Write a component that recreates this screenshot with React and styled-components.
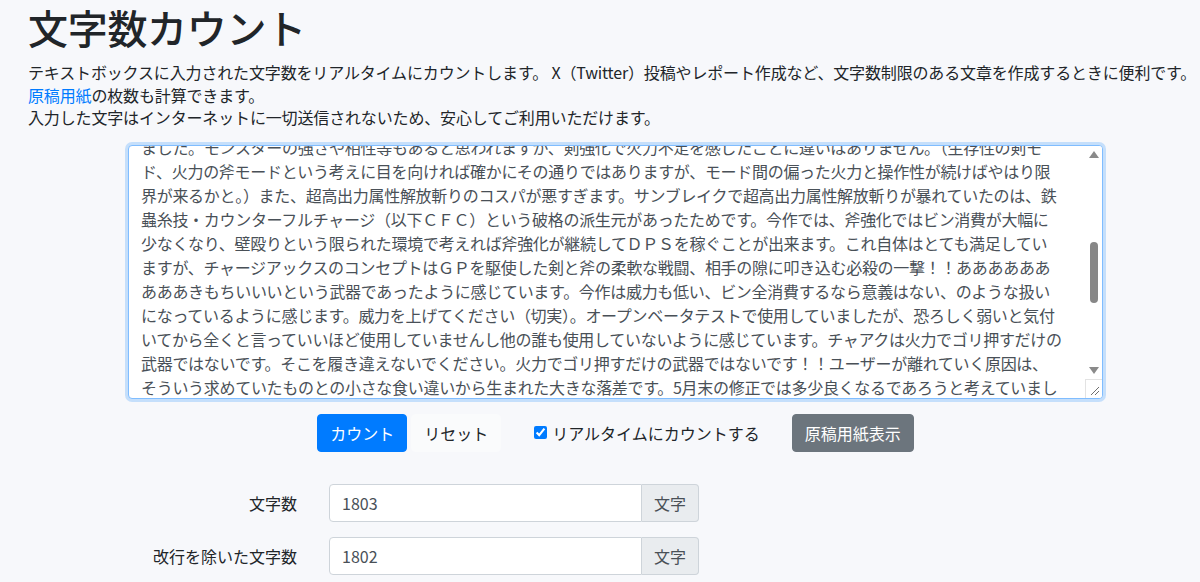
import React, { useLayoutEffect, useRef } from "react";
import styled, { createGlobalStyle } from "styled-components";

const GlobalStyle = createGlobalStyle`
  html, body { margin: 0; padding: 0; }
  body {
    background: #f7f8fb;
    color: #212529;
    font-family: "Noto Sans CJK JP", "Noto Sans", sans-serif;
    font-size: 16px;
    line-height: 1.5;
  }
  * { box-sizing: border-box; }
`;

const Page = styled.main`
  padding: 3px 4px 0 28px;
`;

const Title = styled.h1`
  margin: 0;
  font-size: 40px;
  font-weight: 500;
  line-height: 1.2;
  letter-spacing: -0.3px;
  color: #212529;
`;

const Lead = styled.p`
  margin: 10px 0 0;
  font-size: 16px;
  line-height: 22.5px;
  letter-spacing: -0.15px;
  white-space: nowrap;
`;

const Link = styled.a`
  color: #007bff;
  text-decoration: none;
`;

const Block = styled.div`
  width: 975px;
  margin-left: 100px;
`;

const Frame = styled.div`
  display: flex;
  height: 254px;
  margin-top: 16px;
  background: #fff;
  border: 1px solid #80bdff;
  border-radius: 4px;
  box-shadow: 0 0 0 3px rgba(0, 123, 255, 0.2);
  overflow: hidden;
`;

const Editor = styled.textarea`
  flex: 1;
  min-width: 0;
  height: 100%;
  margin: 0;
  padding: 6px 4px 6px 12px;
  font-family: "Noto Sans CJK JP", sans-serif;
  font-size: 16px;
  line-height: 24px;
  letter-spacing: -0.3px;
  color: #495057;
  background: transparent;
  border: none;
  outline: none;
  resize: none;
  white-space: pre;
  overflow: hidden;
  scrollbar-width: none;
`;

const Rail = styled.div`
  display: flex;
  flex-direction: column;
  width: 17px;
  flex: none;
  background: #fff;
`;

const ArrowButton = styled.div`
  display: flex;
  align-items: center;
  justify-content: center;
  height: 17px;
  flex: none;
`;

const Track = styled.div`
  flex: 1;
  display: flex;
  justify-content: center;
`;

const Thumb = styled.div`
  width: 8px;
  border-radius: 4px;
  background: #878787;
`;

const Grip = styled.div`
  height: 19px;
  flex: none;
  display: flex;
  align-items: flex-end;
  justify-content: flex-end;
  border-top: 1px solid #e3e3e3;
  border-left: 1px solid #e3e3e3;
`;

const Toolbar = styled.div`
  display: flex;
  align-items: center;
  justify-content: center;
  margin-top: 15px;
`;

const Button = styled.button`
  font-family: "Noto Sans CJK JP", sans-serif;
  font-size: 16px;
  line-height: 24px;
  padding: 6px 12px;
  border-radius: 4px;
  border: 1px solid ${(p) => p.$bg};
  background: ${(p) => p.$bg};
  color: ${(p) => p.$fg};
  margin-right: ${(p) => p.$after || 0}px;
  cursor: pointer;
`;

const CheckLabel = styled.label`
  display: flex;
  align-items: center;
  margin-right: 32px;
  font-size: 16px;
  color: #212529;
`;

const Check = styled.input`
  width: 13px;
  height: 13px;
  margin: 0 5px 0 0;
  accent-color: #007bff;
`;

const Results = styled.div`
  display: grid;
  grid-template-columns: 269px 370px;
  column-gap: 32px;
  row-gap: 15px;
  margin-top: 32px;
  align-items: center;
`;

const Label = styled.label`
  text-align: right;
  font-size: 16px;
  color: #212529;
`;

const Group = styled.div`
  display: flex;
  height: 38px;
`;

const Field = styled.input`
  flex: 1;
  min-width: 0;
  height: 100%;
  padding: 6px 12px;
  font-family: "Noto Sans CJK JP", sans-serif;
  font-size: 16px;
  color: #495057;
  background: #fff;
  border: 1px solid #ced4da;
  border-radius: 4px 0 0 4px;
  outline: none;
`;

const Addon = styled.span`
  display: flex;
  align-items: center;
  padding: 6px 12px;
  font-size: 16px;
  color: #495057;
  background: #e9ecef;
  border: 1px solid #ced4da;
  border-left: none;
  border-radius: 0 4px 4px 0;
`;

const before = [
  "チャージアックスを長年愛用してきた一人のハンターとして、今作のチャージアックスについて率直な意見を送らせて",
  "いただきます。まず初めに、開発陣の皆様には素晴らしい作品を作っていただいたことに心から感謝しております。",
  "モンスターの動きや環境の作り込み、ストーリーの演出など、どれを取っても過去作を上回る出来だと感じています。",
  "しかし、チャージアックスという武器に関しては、どうしても納得のいかない点がいくつかありますので、ここに記し",
  "ます。長文となってしまい大変恐縮ですが、一人のユーザーの声として最後まで目を通していただけますと幸いで",
  "す。まず、剣モードの火力についてです。今作の剣モードは属性強化状態でも火力が低く、斧モードと比べると",
  "その差は歴然です。剣強化の恩恵もサンブレイクの頃と比べて小さくなっており、剣モードで立ち回る理由がほとんど",
  "見当たりません。高出力属性解放斬りも、威力に対してビンの消費が重く、気軽に振れる技ではなくなってしまいまし",
  "た。また、ガードポイントからの派生も、モンスターによっては非常に狙いにくく、リスクに見合ったリターンが得ら",
  "れているとは言えません。集中モードや相殺技など新しいシステムが追加されたことは喜ばしいのですが、チャージア",
  "ックスの場合はそれらを活かす場面が少なく、結局は斧モードで殴り続けるだけの単調な立ち回りになりがちです。",
  "私自身、発売日から毎日のようにチャージアックスを担いで狩りに出かけていましたが、上位に上がった頃から明らか",
  "に討伐時間が伸びるようになり、他の武器に持ち替えた途端に大幅に時間が短縮されたことで、その差を痛感いたし",
];

const visible = [
  "ました。モンスターの強さや相性等もあると思われますが、剣強化で火力不足を感じたことに違いはありません。（生存性の剣モ",
  "ド、火力の斧モードという考えに目を向ければ確かにその通りではありますが、モード間の偏った火力と操作性が続けばやはり限",
  "界が来るかと。）また、超高出力属性解放斬りのコスパが悪すぎます。サンブレイクで超高出力属性解放斬りが暴れていたのは、鉄",
  "蟲糸技・カウンターフルチャージ（以下ＣＦＣ）という破格の派生元があったためです。今作では、斧強化ではビン消費が大幅に",
  "少なくなり、壁殴りという限られた環境で考えれば斧強化が継続してＤＰＳを稼ぐことが出来ます。これ自体はとても満足してい",
  "ますが、チャージアックスのコンセプトはＧＰを駆使した剣と斧の柔軟な戦闘、相手の隙に叩き込む必殺の一撃！！ああああああ",
  "あああきもちいいいという武器であったように感じています。今作は威力も低い、ビン全消費するなら意義はない、のような扱い",
  "になっているように感じます。威力を上げてください（切実）。オープンベータテストで使用していましたが、恐ろしく弱いと気付",
  "いてから全くと言っていいほど使用していませんし他の誰も使用していないように感じています。チャアクは火力でゴリ押すだけの",
  "武器ではないです。そこを履き違えないでください。火力でゴリ押すだけの武器ではないです！！ユーザーが離れていく原因は、",
  "そういう求めていたものとの小さな食い違いから生まれた大きな落差です。5月末の修正では多少良くなるであろうと考えていまし",
];

const after = [
  "たが、実際にはほとんど変化が感じられず、非常に残念に思っております。剣モードの火力の底上げ、超高出力属性",
  "解放斬りのビン消費量や威力の見直し、ガードポイントの判定の改善など、調整していただきたい点は多々あります。",
  "チャージアックスは、ガードで攻撃を受け止め、ビンを溜め、ここぞという場面で必殺の一撃を叩き込むという、",
  "他の武器にはない独特の爽快感を持った武器です。その爽快感こそがこの武器の魅力であり、多くのユーザーが",
  "チャージアックスを使い続けてきた理由だと思っています。どうか次回以降のアップデートでは、その魅力を取り戻",
  "せるような調整をしていただけることを心より願っております。長々と失礼いたしました。",
  "最後になりますが、今後もモンスターハンターシリーズを応援しております。開発陣の皆様、お体に気をつけて",
  "これからも素晴らしい狩猟体験を届けてください。チャージアックスが再び輝ける日を心待ちにしております。",
  "今後のアップデートの内容を楽しみにしながら、これからもチャージアックスを担いで狩りに出かけたいと思います。",
  "一人のチャアク使いより。",
];

const fullText = [...before, ...visible, ...after].join("\n");

// scroll geometry
const LINE = 24;
const CLIENT = 252;
const CONTENT = (before.length + visible.length + after.length) * LINE + 12;
const SCROLL_TOP = 6 + LINE * before.length + 11;
const TRACK = CLIENT - 17 - 17 - 19;
const THUMB_H = Math.round((TRACK * CLIENT) / CONTENT);
const THUMB_TOP = Math.round(((TRACK - THUMB_H) * SCROLL_TOP) / (CONTENT - CLIENT));

const Arrow = ({ up }) => (
  <svg width="10" height="7" viewBox="0 0 10 7">
    <polygon points={up ? "0,7 5,0 10,7" : "0,0 5,7 10,0"} fill="#8a8a8a" />
  </svg>
);

export default function App() {
  const ref = useRef(null);
  useLayoutEffect(() => {
    if (ref.current) ref.current.scrollTop = SCROLL_TOP;
  }, []);

  return (
    <>
      <GlobalStyle />
      <Page>
        <Title>文字数カウント</Title>
        <Lead>
          テキストボックスに入力された文字数をリアルタイムにカウントします。 X（Twitter）投稿やレポート作成など、文字数制限のある文章を作成するときに便利です。
          <br />
          <Link href="#">原稿用紙</Link>の枚数も計算できます。
          <br />
          入力した文字はインターネットに一切送信されないため、安心してご利用いただけます。
        </Lead>
        <Block>
          <Frame>
            <Editor ref={ref} wrap="off" defaultValue={fullText} spellCheck={false} />
            <Rail>
              <ArrowButton>
                <Arrow up />
              </ArrowButton>
              <Track>
                <Thumb style={{ marginTop: THUMB_TOP, height: THUMB_H }} />
              </Track>
              <ArrowButton>
                <Arrow />
              </ArrowButton>
              <Grip>
                <svg width="16" height="16" viewBox="0 0 16 16">
                  <line x1="13" y1="5" x2="5" y2="13" stroke="#6f6f6f" strokeWidth="1" />
                  <line x1="13" y1="9" x2="9" y2="13" stroke="#6f6f6f" strokeWidth="1" />
                </svg>
              </Grip>
            </Rail>
          </Frame>
          <Toolbar>
            <Button $bg="#007bff" $fg="#fff" $after={4}>カウント</Button>
            <Button $bg="#fafbfc" $fg="#212529" $after={33}>リセット</Button>
            <CheckLabel>
              <Check type="checkbox" defaultChecked />
              リアルタイムにカウントする
            </CheckLabel>
            <Button $bg="#6c757d" $fg="#fff">原稿用紙表示</Button>
          </Toolbar>
        </Block>
        <Results>
          <Label>文字数</Label>
          <Group>
            <Field readOnly value="1803" />
            <Addon>文字</Addon>
          </Group>
          <Label>改行を除いた文字数</Label>
          <Group>
            <Field readOnly value="1802" />
            <Addon>文字</Addon>
          </Group>
        </Results>
      </Page>
    </>
  );
}
